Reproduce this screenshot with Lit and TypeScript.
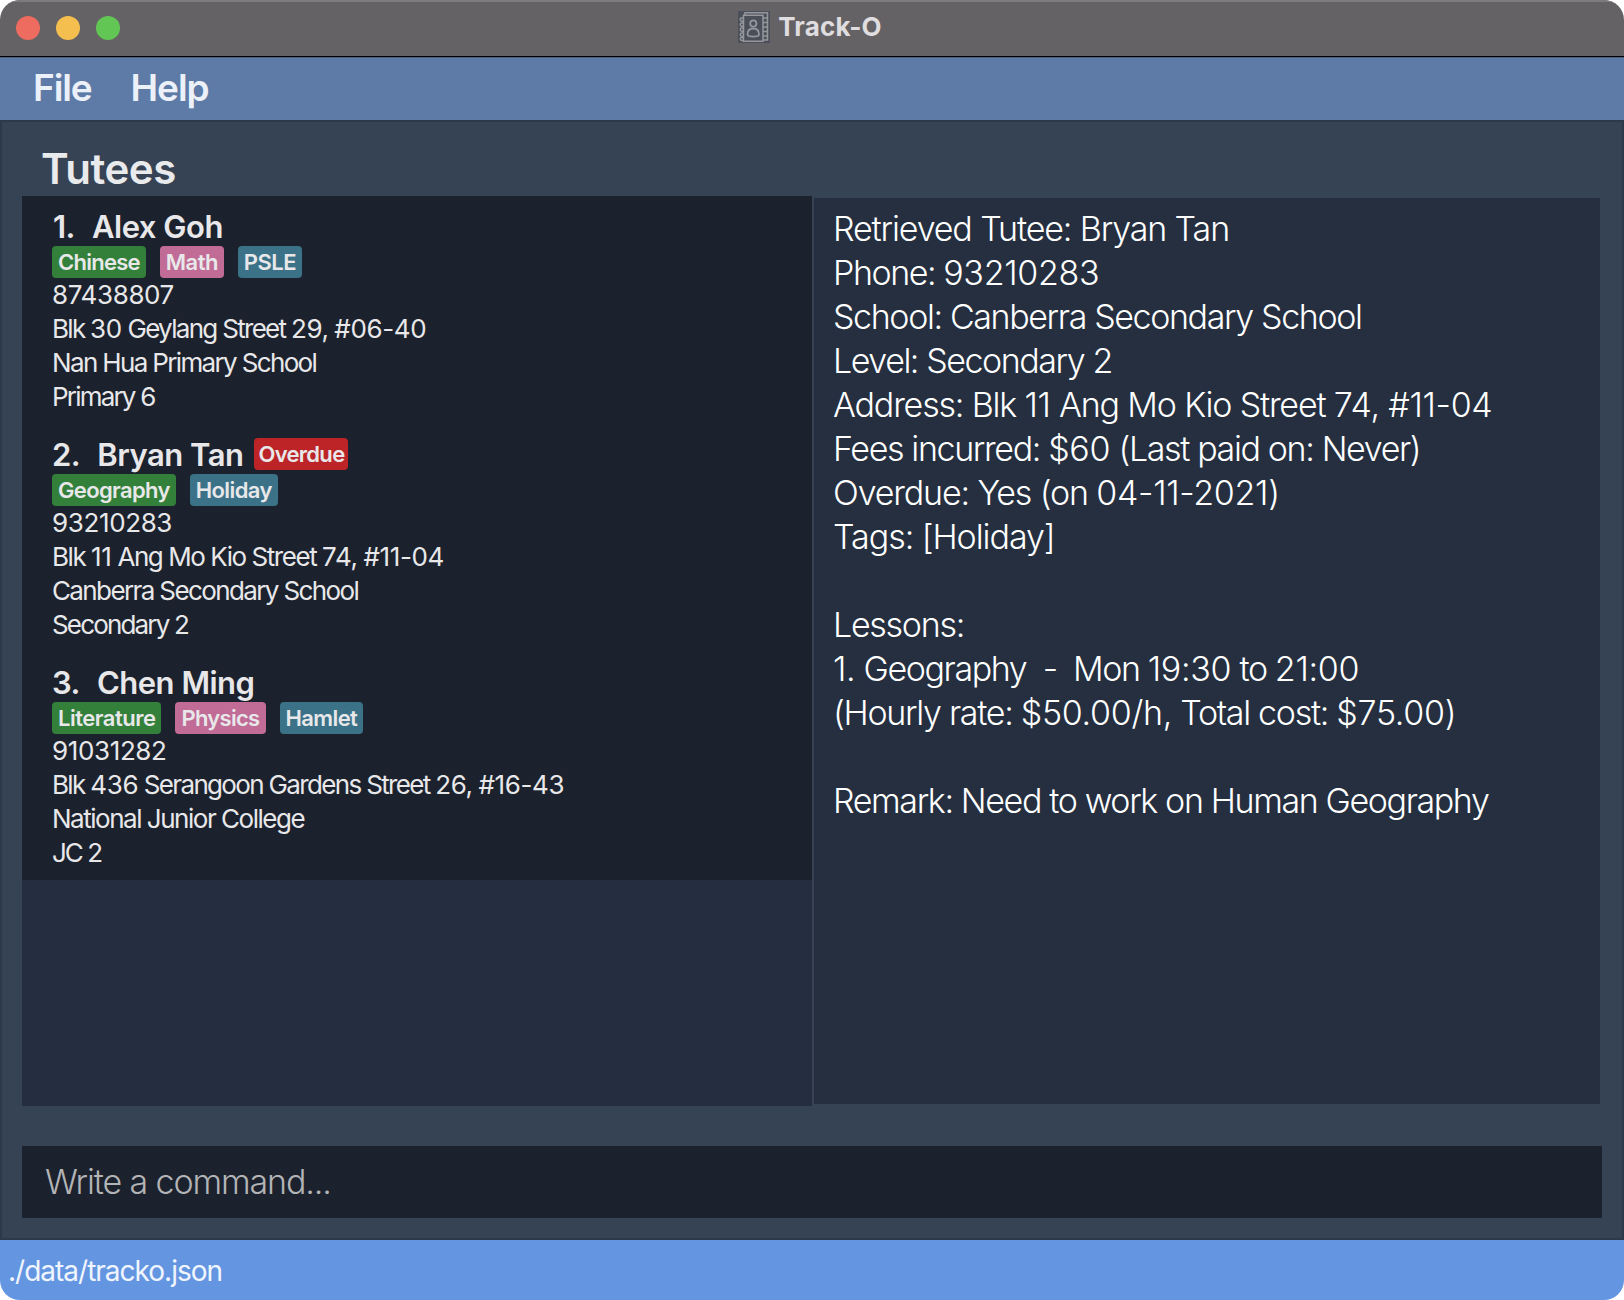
import { LitElement, html, css, nothing } from "lit";
import { customElement, property } from "lit/decorators.js";

/** A line of text with the letter spacing of its words in pixels. */
type Line = [text: string, tracking: number];

interface Tutee {
  name: string;
  overdue?: boolean;
  tags: [label: string, tone: string, tracking: number][];
  lines: Line[];
}

const TUTEES: Tutee[] = [
  {
    name: "Alex Goh",
    tags: [["Chinese", "green", -0.74], ["Math", "pink", -0.55], ["PSLE", "teal", -0.55]],
    lines: [
      ["87438807", 0],
      ["Blk 30 Geylang Street 29, #06-40", -1.7],
      ["Nan Hua Primary School", -1.65],
      ["Primary 6", -1.8],
    ],
  },
  {
    name: "Bryan Tan",
    overdue: true,
    tags: [["Geography", "green", -0.65], ["Holiday", "teal", -0.6]],
    lines: [
      ["93210283", 0],
      ["Blk 11 Ang Mo Kio Street 74, #11-04", -1.45],
      ["Canberra Secondary School", -1.62],
      ["Secondary 2", -1.83],
    ],
  },
  {
    name: "Chen Ming",
    tags: [["Literature", "green", -0.5], ["Physics", "pink", -0.7], ["Hamlet", "teal", -0.62]],
    lines: [
      ["91031282", 0],
      ["Blk 436 Serangoon Gardens Street 26, #16-43", -1.66],
      ["National Junior College", -1.48],
      ["JC 2", -2],
    ],
  },
];

const RESULT: Line[] = [
  ["Retrieved Tutee: Bryan Tan", -1.14],
  ["Phone: 93210283", -1.46],
  ["School: Canberra Secondary School", -1.38],
  ["Level: Secondary 2", -1.45],
  ["Address: Blk 11 Ang Mo Kio Street 74, #11-04", -1.18],
  ["Fees incurred: $60 (Last paid on: Never)", -1.37],
  ["Overdue: Yes (on 04-11-2021)", -1.15],
  ["Tags: [Holiday]", -1.05],
  ["", 0],
  ["Lessons:", -1.28],
  ["1. Geography  -  Mon 19:30 to 21:00", -1.4],
  ["(Hourly rate: $50.00/h, Total cost: $75.00)", -1.3],
  ["", 0],
  ["Remark: Need to work on Human Geography", -1.38],
];

/** Numbers are set wider than the words around them. */
const spaced = (text: string) =>
  text.split(/(\s+)/).map((w) => (/\d/.test(w) ? html`<span class="digits">${w}</span>` : w));

@customElement("tutee-card")
class TuteeCard extends LitElement {
  @property({ attribute: false }) tutee!: Tutee;
  @property({ type: Number }) index = 1;

  static styles = css`
    :host {
      display: block;
      box-sizing: border-box;
      height: 228px;
      padding: 10px 30px 0;
      background: #1c222d;
      color: #e8e8ea;
      white-space: nowrap;
    }
    .head {
      display: flex;
      align-items: center;
      height: 40px;
      font-size: 31px;
      font-weight: 600;
      letter-spacing: -0.5px;
    }
    .num { min-width: 23px; margin-right: 17px; text-align: right; }
    .tags { display: flex; gap: 14px; height: 32px; }
    .tag {
      box-sizing: border-box;
      height: 32px;
      line-height: 32px;
      padding: 0 6px;
      border-radius: 4px;
      font-size: 22px;
      font-weight: 600;
    }
    .green { background: #33803a; }
    .pink { background: #c16c96; }
    .teal { background: #3c7288; }
    .red { background: #bd2427; margin-left: 11px; padding: 0 4px; letter-spacing: -0.7px; }
    .line {
      height: 34px;
      line-height: 34px;
      font-size: 26px;
    }
    .digits { letter-spacing: -0.37px; }
  `;

  render() {
    const t = this.tutee;
    return html`
      <div class="head">
        <span class="num">${this.index}.</span><span>${t.name}</span>${t.overdue
          ? html`<span class="tag red">Overdue</span>`
          : nothing}
      </div>
      <div class="tags">
        ${t.tags.map(([s, c, ls]) => html`<span class="tag ${c}" style="letter-spacing:${ls}px">${s}</span>`)}
      </div>
      ${t.lines.map(([s, ls]) => html`<div class="line" style="letter-spacing:${ls}px">${spaced(s)}</div>`)}
    `;
  }
}

@customElement("app-root")
class AppRoot extends LitElement {
  static styles = css`
    :host {
      display: block;
      width: 1624px;
      height: 1300px;
      background: #fff;
      font-family: Inter, "Liberation Sans", sans-serif;
    }
    .window {
      display: flex;
      flex-direction: column;
      height: 100%;
      border-radius: 20px;
      overflow: hidden;
    }
    .titlebar {
      display: grid;
      grid-template-columns: 1fr auto 1fr;
      align-items: center;
      box-sizing: border-box;
      height: 57px;
      padding: 0 20px 0 16px;
      background: #656265;
      border-top: 2px solid #7d7b7d;
      border-bottom: 1px solid #000;
    }
    .lights { display: flex; gap: 16px; padding-bottom: 2px; }
    .light { width: 24px; height: 24px; border-radius: 50%; }
    .close { background: #ed6b5f; }
    .min { background: #f5bf4f; }
    .max { background: #62c655; }
    .title {
      display: flex;
      align-items: center;
      gap: 8px;
      padding-bottom: 5px;
      color: #dfdddf;
      font-size: 26px;
      font-weight: 700;
      letter-spacing: 0.2px;
    }
    .title svg { display: block; }
    .menubar {
      display: flex;
      align-items: center;
      box-sizing: border-box;
      height: 63px;
      padding: 0 33px 4px;
      gap: 39px;
      border-top: 1px solid #4a5f80;
      background: #5d7ba6;
      color: #ecf0f8;
      font-size: 37px;
      font-weight: 600;
      letter-spacing: -1.1px;
    }
    .main {
      display: flex;
      flex-direction: column;
      box-sizing: border-box;
      height: 1120px;
      border: 2px solid #2d394a;
      background: #364355;
      padding: 20px 20px 0;
    }
    .heading {
      height: 54px;
      line-height: 54px;
      padding-left: 19px;
      font-size: 42px;
      font-weight: 600;
      letter-spacing: -0.45px;
      color: #e9eaec;
    }
    .panels { display: flex; gap: 2px; height: 910px; }
    .list { width: 790px; background: #242e40; }
    .result {
      box-sizing: border-box;
      width: 786px;
      margin: 2px 0;
      padding: 9px 19px;
      background: #252f3f;
      color: #fff;
      font-size: 34px;
      font-weight: 300;
      line-height: 44px;
      white-space: pre;
    }
    .row { height: 44px; }
    .digits { letter-spacing: -0.3px; }
    .command {
      box-sizing: border-box;
      height: 72px;
      margin: 40px 0 0;
      padding: 0 23px;
      line-height: 72px;
      background: #1c222d;
      color: #b3b4b6;
      font-size: 34px;
      font-weight: 300;
      letter-spacing: -1.13px;
    }
    .status {
      height: 60px;
      line-height: 63px;
      padding-left: 8px;
      background: #6495e1;
      color: #f0f5fd;
      font-size: 28px;
      letter-spacing: -1px;
    }
  `;

  render() {
    return html`
      <div class="window">
        <div class="titlebar">
          <div class="lights">
            <span class="light close"></span><span class="light min"></span><span class="light max"></span>
          </div>
          <div class="title">
            <svg width="32" height="32" viewBox="0 0 32 32" fill="none" stroke="#95979c" stroke-width="1.5">
              <rect width="32" height="32" fill="#4a4f5a" stroke="none" />
              <path d="M7 4.2V1.8H29.5V29H25.5M7 4.2H25V30.3H5.5V4.2ZM25 7h4.5M25 11.5h4.5M25 16h4.5M25 20.5h4.5M25 25h4.5" />
              <path d="M6 7H3.8a1.6 1.6 0 0 0 0 3.2H6M6 12H3.8a1.6 1.6 0 0 0 0 3.2H6M6 17H3.8a1.6 1.6 0 0 0 0 3.2H6M6 22H3.8a1.6 1.6 0 0 0 0 3.2H6M6 26.5H3.8a1.5 1.5 0 0 0 0 3H6" />
              <circle cx="15.3" cy="12.5" r="3.1" stroke-width="1.8" />
              <path d="M9.5 23.5C9.5 19.5 12 17.5 15.3 17.5S21 19.5 21 23.5C21 26.3 9.5 26.3 9.5 23.5Z" stroke-width="1.8" />
            </svg>
            <span>Track-O</span>
          </div>
        </div>
        <div class="menubar"><span>File</span><span>Help</span></div>
        <div class="main">
          <div class="heading">Tutees</div>
          <div class="panels">
            <div class="list">
              ${TUTEES.map((t, i) => html`<tutee-card .tutee=${t} .index=${i + 1}></tutee-card>`)}
            </div>
            <div class="result">${RESULT.map(
              ([s, ls]) => html`<div class="row" style="letter-spacing:${ls}px">${spaced(s)}</div>`,
            )}</div>
          </div>
          <div class="command">Write a command...</div>
        </div>
        <div class="status">./data/tracko.json</div>
      </div>
    `;
  }
}
